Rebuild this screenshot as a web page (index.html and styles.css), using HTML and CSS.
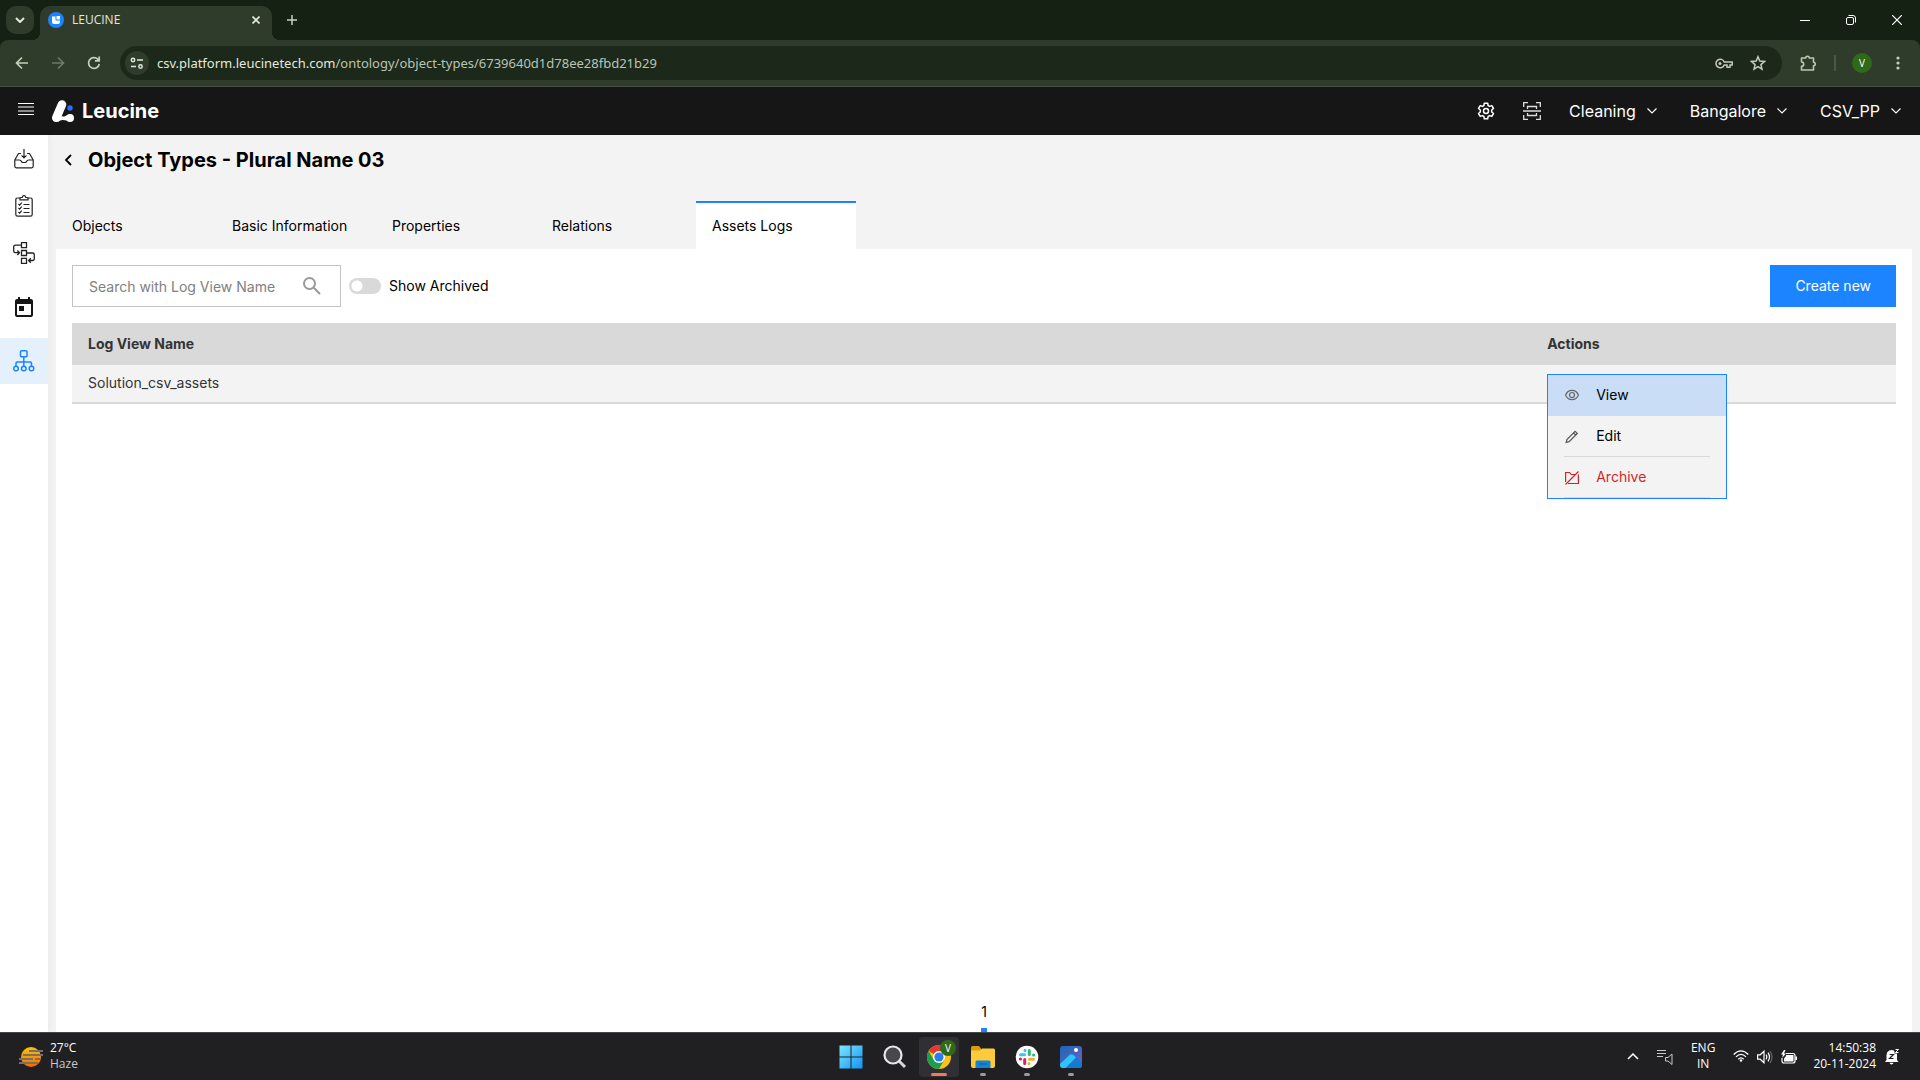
FILE: index.html
```html
<!DOCTYPE html>
<html lang="en">
<head>
    <meta charset="UTF-8">
    <meta name="viewport" content="width=device-width, initial-scale=1.0">
    <title>LEUCINE</title>
    <link rel="stylesheet" href="styles.css">
</head>
<body>

<!-- browser -->
<div class="tab-strip">
    <button class="tab-search" aria-label="Search tabs"><svg width="10" height="6" viewBox="0 0 10 6"><path d="M1 1l4 4 4-4" fill="none" stroke="#dfe8da" stroke-width="2"/></svg></button>
    <div class="browser-tab">
        <svg width="16" height="16" viewBox="0 0 16 16"><circle cx="8" cy="8" r="8" fill="#1d84ff"/><path d="M4 4.5h3.500v4H12v1.500a2 2 0 0 1-2 2H6a2 2 0 0 1-2-2z" fill="#fff"/><path d="M8.500 4H12v3.500H8.500z" fill="#fff"/></svg>
        <span class="tab-name">LEUCINE</span>
        <button class="icon-btn" aria-label="Close tab"><svg width="8" height="8" viewBox="0 0 8 8"><path d="M0.500 0.500l7 7M7.500 0.500l-7 7" stroke="#e2e9dd" stroke-width="1.600"/></svg></button>
    </div>
    <button class="icon-btn new-tab" aria-label="New tab"><svg width="10" height="10" viewBox="0 0 10 10"><path d="M5 0v10M0 5h10" stroke="#c6d3c0" stroke-width="1.500"/></svg></button>
    <div class="window-controls">
        <button aria-label="Minimize"><svg width="10" height="10" viewBox="0 0 10 10"><path d="M0 5.500h10" stroke="#fff"/></svg></button>
        <button aria-label="Restore"><svg width="10" height="10" viewBox="0 0 10 10" fill="none" stroke="#fff"><rect x="0.500" y="2.500" width="7" height="7" rx="1.500"/><path d="M2.500 0.500H7a2.500 2.500 0 0 1 2.500 2.500v4.500"/></svg></button>
        <button aria-label="Close"><svg width="10" height="10" viewBox="0 0 10 10"><path d="M0 0l10 10M10 0L0 10" stroke="#fff" stroke-width="1.200"/></svg></button>
    </div>
</div>

<div class="toolbar">
    <div class="toolbar-nav">
        <button class="icon-btn" aria-label="Back"><svg width="14" height="14" viewBox="0 0 14 14" fill="none" stroke="#c0d2b8" stroke-width="1.700"><path d="M13 7H2M7 1.500L1.500 7 7 12.500"/></svg></button>
        <button class="icon-btn" aria-label="Forward"><svg width="14" height="14" viewBox="0 0 14 14" fill="none" stroke="#6b7a66" stroke-width="1.700"><path d="M1 7h11M7 1.500L12.500 7 7 12.500"/></svg></button>
        <button class="icon-btn" aria-label="Reload"><svg width="14" height="14" viewBox="0 0 14 14" fill="none" stroke="#c0d2b8" stroke-width="1.700"><path d="M12.300 8A5.400 5.400 0 1 1 10.800 3.200L12 4.500"/><path d="M12.200 0.500v4.300H7.900"/></svg></button>
    </div>
    <div class="omnibox">
        <button class="site-info" aria-label="Site information"><svg width="14" height="12" viewBox="0 0 14 12" fill="none" stroke="#dfe8da" stroke-width="1.500"><circle cx="3" cy="3" r="1.700"/><path d="M7 3h6M1 9.500h5"/><circle cx="10.500" cy="9.500" r="1.700"/></svg></button>
        <span class="url">csv.platform.leucinetech.com<span class="url-path">/ontology/object-types/6739640d1d78ee28fbd21b29</span></span>
        <button class="icon-btn" aria-label="Passwords"><svg width="18" height="11" viewBox="0 0 18 11" fill="none" stroke="#c4cabf" stroke-width="1.500"><path d="M9.300 4A4.300 4.300 0 1 0 9.300 7H12v2.200h3V7h2.200V4z"/><circle cx="5" cy="5.500" r="1.500" fill="#c4cabf" stroke="none"/></svg></button>
        <button class="icon-btn" aria-label="Bookmark"><svg width="16" height="16" viewBox="0 0 16 16" fill="none" stroke="#c4cabf" stroke-width="1.500"><path d="M8 1.700l1.800 4.400 4.700.4-3.600 3.100 1.100 4.600L8 11.700l-4 2.500 1.100-4.600L1.500 6.500l4.700-.4z"/></svg></button>
    </div>
    <button class="icon-btn" aria-label="Extensions"><svg width="17" height="17" viewBox="0 0 17 17"><path d="M1.500 3h4.300a1.700 1.700 0 0 1 3.400 0h4.300v4.300a1.700 1.700 0 0 1 0 3.400V15H1.500v-3.600a2.200 2.200 0 0 0 0-4.400z" fill="none" stroke="#b7ccae" stroke-width="1.600" stroke-linejoin="round"/></svg></button>
    <span class="toolbar-line"></span>
    <button class="profile">V</button>
    <button class="icon-btn menu-dots" aria-label="Menu"><svg width="4" height="14" viewBox="0 0 4 14" fill="#c0d2b8"><circle cx="2" cy="2" r="1.600"/><circle cx="2" cy="7" r="1.600"/><circle cx="2" cy="12" r="1.600"/></svg></button>
</div>

<!-- app header -->
<header class="app-header">
    <button class="icon-btn burger" aria-label="Toggle menu"><svg width="16" height="12" viewBox="0 0 16 12" stroke="#fff"><path d="M0 0.500h16M0 4h16M0 8h16M0 11.500h16"/></svg></button>
    <a class="logo" href="#">
        <svg width="22" height="22" viewBox="0 0 22 22"><path d="M10 4.500L4.300 17.800" stroke="#fff" stroke-width="8.600" stroke-linecap="round"/><path d="M6 13.500q3 4 7 2.700l3-1.500v6l-3-.4q-4-1.200-7 1.500z" fill="#fff"/><circle cx="18" cy="18" r="4" fill="#fff"/><circle cx="18" cy="8" r="2.700" fill="#2f6bff"/></svg>
        <span>Leucine</span>
    </a>
    <div class="header-menu">
        <button class="icon-btn" aria-label="Settings"><svg width="18" height="18" viewBox="0 0 18 18" fill="none" stroke="#fff" stroke-width="1.500" stroke-linejoin="round"><path d="M7.300 1.200h3.400l.4 2.300 1.500.9 2.200-.8 1.700 2.900-1.800 1.500v2l1.800 1.500-1.700 2.900-2.200-.8-1.500.9-.4 2.300H7.300l-.4-2.300-1.500-.9-2.200.8-1.700-2.900L3.300 10V8L1.500 6.500l1.700-2.900 2.200.8 1.500-.9z"/><circle cx="9" cy="9" r="2.500"/></svg></button>
        <button class="icon-btn" aria-label="Scan"><svg width="18" height="18" viewBox="0 0 18 18" fill="none" stroke="#dedede" stroke-width="1.300"><path d="M0.700 5V0.700H5M13 0.700h4.300V5M17.300 13v4.300H13M5 17.300H0.700V13M0 9h18M4.500 7V4.500h9V7M4.500 11v2.500h9V11"/></svg></button>
        <button class="drop">Cleaning <svg width="10" height="6" viewBox="0 0 10 6"><path d="M0.500 0.500L5 5l4.500-4.500" fill="none" stroke="#fff" stroke-width="1.200"/></svg></button>
        <button class="drop">Bangalore <svg width="10" height="6" viewBox="0 0 10 6"><path d="M0.500 0.500L5 5l4.500-4.500" fill="none" stroke="#fff" stroke-width="1.200"/></svg></button>
        <button class="drop">CSV_PP <svg width="10" height="6" viewBox="0 0 10 6"><path d="M0.500 0.500L5 5l4.500-4.500" fill="none" stroke="#fff" stroke-width="1.200"/></svg></button>
    </div>
</header>

<div class="workspace">
    <nav class="sidebar">
        <a href="#" aria-label="Inbox"><svg width="20" height="20" viewBox="0 0 20 20" fill="none" stroke="#222" stroke-width="1.200" stroke-linejoin="round"><path d="M7 4.500H4.500L0.800 11v6.300q0 1.500 1.500 1.500h15.400q1.500 0 1.500-1.500V11l-3.700-6.500H13M0.800 11h4.500q1.500 0 2 1.300t1.700 1.200h2q1.200 0 1.700-1.200t2-1.300h4.500M10 0v8.500M7.500 6.300L10 8.800l2.500-2.500"/></svg></a>
        <a href="#" aria-label="Checklists"><svg width="18" height="22" viewBox="0 0 18 22" fill="none" stroke="#222" stroke-width="1.200"><path d="M5 3H2.500Q0.800 3 0.800 4.700v14.800q0 1.700 1.700 1.700h13q1.700 0 1.700-1.700V4.700Q17.200 3 15.500 3H13"/><path d="M5 4.800V3.200q0-.7 1-.7h1.200Q7.500 0.700 9 0.700t1.800 1.800H12q1 0 1 .7v1.600z"/><path d="M3.500 9l1.200 1.200 2-2.500M3.500 13l1.200 1.200 2-2.500M3.500 17l1.200 1.200 2-2.500M8.500 9.500h6M8.500 13.500h6M8.500 17.500h6"/></svg></a>
        <a href="#" aria-label="Flows"><svg width="22" height="22" viewBox="0 0 22 22" fill="none" stroke="#222" stroke-width="1.300"><path d="M8.500 0.700h5v5h-5zM8.500 8.500h5v5h-5zM8.500 16.300h5v5h-5zM8.500 3.200h-6Q0.700 3.200 0.700 5v4q0 1.700 1.500 1.700H6M4.300 8.500l2.200 2.200L4.300 13M13.500 11h6q1.800 0 1.800 1.800v4q0 1.700-1.500 1.700H16M17.800 16.300l-2.200 2.200 2.200 2.200"/></svg></a>
        <a class="spaced" href="#" aria-label="Calendar"><svg width="18" height="20" viewBox="0 0 18 20" fill="#161616"><path d="M2 2h1V0h2v2h8V0h2v2h1a2 2 0 0 1 2 2v14a2 2 0 0 1-2 2H2a2 2 0 0 1-2-2V4a2 2 0 0 1 2-2zm0 5v11h14V7zm2 2h5v5H4z" fill-rule="evenodd"/></svg></a>
        <a class="spaced active" href="#" aria-label="Ontology"><svg width="22" height="22" viewBox="0 0 22 22" fill="none" stroke="#1d84ff" stroke-width="1.500"><rect x="7.500" y="0.800" width="6.500" height="6" rx="1"/><circle cx="3" cy="18.500" r="2.300"/><circle cx="10.800" cy="18.500" r="2.300"/><circle cx="18.500" cy="18.500" r="2.300"/><path d="M10.800 6.800v9.400M3 16.200v-3q0-1.200 1.200-1.200h13.100q1.200 0 1.200 1.200v3"/></svg></a>
    </nav>

    <main class="content">
        <div class="page-title">
            <button class="icon-btn" aria-label="Go back"><svg width="8" height="12" viewBox="0 0 8 12"><path d="M7 1L2 6l5 5" fill="none" stroke="#000" stroke-width="1.800"/></svg></button>
            <h1>Object Types - Plural Name 03</h1>
        </div>

        <nav class="tabs">
            <a href="#">Objects</a>
            <a href="#">Basic Information</a>
            <a href="#">Properties</a>
            <a href="#">Relations</a>
            <a class="active" href="#">Assets Logs</a>
        </nav>

        <section class="panel">
            <div class="filters">
                <div class="search">
                    <input type="text" placeholder="Search with Log View Name" aria-label="Search with Log View Name">
                    <svg width="18" height="18" viewBox="0 0 18 18" fill="none" stroke="#999" stroke-width="2"><circle cx="6.500" cy="6.500" r="5.500"/><path d="M10.500 10.500l6.500 6.500"/></svg>
                </div>
                <input class="toggle" type="checkbox" id="archived">
                <label for="archived">Show Archived</label>
                <button class="create">Create new</button>
            </div>

            <table>
                <thead>
                    <tr><th class="name-col">Log View Name</th><th>Actions</th></tr>
                </thead>
                <tbody>
                    <tr>
                        <td>Solution_csv_assets</td>
                        <td class="actions">
                            <div class="menu">
                                <button class="selected"><svg width="14" height="14" viewBox="0 0 14 14" fill="none" stroke="#666" stroke-width="1.200"><path d="M0.600 6Q2.500 1.300 7 1.300T13.400 6Q11.500 10.700 7 10.700T0.600 6z"/><circle cx="7" cy="6" r="2.500"/></svg><span>View</span></button>
                                <button><svg width="14" height="14" viewBox="0 0 14 14" fill="none" stroke="#555" stroke-width="1.200"><path d="M1.200 12.500l.7-3 8.200-8.200 2.200 2.200-8.200 8.200zM8.500 3l2.200 2.200"/></svg><span>Edit</span></button>
                                <button class="danger"><svg width="14" height="14" viewBox="0 0 14 14" fill="none" stroke="#da1e28" stroke-width="1.200"><path d="M0.600 11V1.500h4L6.200 3.500H10M13.400 3.500v9H3M0.500 13.500L13.500 0.500"/></svg><span>Archive</span></button>
                            </div>
                        </td>
                    </tr>
                </tbody>
            </table>

            <div class="pagination"><button>1</button></div>
        </section>
    </main>
</div>

<!-- windows taskbar -->
<footer class="taskbar">
    <div class="weather">
        <svg width="24" height="20" viewBox="0 0 24 20"><defs><linearGradient id="sun" x2="0" y2="1"><stop stop-color="#ffc400"/><stop offset="1" stop-color="#f26a00"/></linearGradient></defs><circle cx="12" cy="10" r="10" fill="url(#sun)"/><path d="M10 4h14M4 8h20M0 12h14M16 12h5M0 16h19" stroke="#77706a" stroke-width="2"/></svg>
        <div><span>27°C</span><span class="dim">Haze</span></div>
    </div>

    <div class="apps">
        <button aria-label="Start"><svg width="24" height="24" viewBox="0 0 24 24"><defs><linearGradient id="win" gradientUnits="userSpaceOnUse" x1="0" y1="0" x2="24" y2="24"><stop stop-color="#7fe9ff"/><stop offset="1" stop-color="#0f91f5"/></linearGradient></defs><path d="M0.500 0.500H11.500v11H0.500zM12.500 0.500h11v11h-11zM0.500 12.500H11.500v11H0.500zM12.500 12.500h11v11h-11z" fill="url(#win)"/></svg></button>
        <button aria-label="Search"><svg width="24" height="24" viewBox="0 0 24 24" fill="none"><path d="M16 16l6 6" stroke="#d4d8dc" stroke-width="3"/><circle cx="10" cy="10" r="8.500" fill="#48474c" stroke="#e6e9ec" stroke-width="2.200"/></svg></button>
        <button class="open current" aria-label="Chrome"><svg width="24" height="24" viewBox="0 0 24 24"><circle cx="12" cy="12" r="12" fill="#fbc116"/><path d="M12 12L1.600 6A12 12 0 0 1 22.400 6z" fill="#e53a2f"/><path d="M1.600 6A12 12 0 0 0 12 24l5.200-9L12 12 6.800 15z" fill="#1e9e4a"/><circle cx="12" cy="12" r="6" fill="#fff"/><circle cx="12" cy="12" r="4.600" fill="#2b7de9"/></svg><span class="badge">V</span></button>
        <button class="open" aria-label="File Explorer"><svg width="24" height="22" viewBox="0 0 24 22"><path d="M0 1.500Q0 0 1.500 0H8l2 2.500V6H0z" fill="#dd9b0c"/><path d="M0 4.500h9L11 2.500h11.500Q24 2.500 24 4v16q0 2-2 2H2q-2 0-2-2z" fill="#fdcb3c"/><path d="M4.500 22v-6q0-1.500 1.500-1.500h12q1.500 0 1.500 1.500v6z" fill="#1283d8"/><path d="M8 18h8" stroke="#0b5ea5"/></svg></button>
        <button class="open" aria-label="Slack"><svg width="24" height="24" viewBox="0 0 24 24"><circle cx="12" cy="12" r="11.300" fill="#fff"/><g fill="none" stroke-width="3" stroke-linecap="round"><path d="M5.500 9.700h4M10 5.300v.2" stroke="#36c5f0"/><path d="M14.300 5.500v4M18.700 10h-.2" stroke="#2eb67d"/><path d="M14.500 14.300h4M14 18.700v-.2" stroke="#ecb22e"/><path d="M9.700 14.500v4M5.300 14h.2" stroke="#e01e5a"/></g></svg></button>
        <button class="open" aria-label="Photos"><svg width="24" height="24" viewBox="0 0 24 24"><defs><linearGradient id="sky" x2="1" y2="1"><stop stop-color="#1668b8"/><stop offset="1" stop-color="#7560c0"/></linearGradient><clipPath id="frame"><rect x="1" y="1" width="22" height="22" rx="3"/></clipPath></defs><g clip-path="url(#frame)"><path d="M0 0h24v24H0z" fill="url(#sky)"/><path d="M12 10q1.500-1.500 3 0l9 9v5H0z" fill="#1679d4"/><path d="M0 20l10.500-10q2-1.500 4 0l2.500 2.500L5.500 24H0z" fill="#31c3f4"/></g><circle cx="17" cy="5" r="2" fill="#fff"/></svg></button>
    </div>

    <div class="tray">
        <button class="icon-btn" aria-label="Show hidden icons"><svg width="12" height="7" viewBox="0 0 12 7"><path d="M1 6l5-5 5 5" fill="none" stroke="#fff" stroke-width="1.500"/></svg></button>
        <svg width="16" height="16" viewBox="0 0 16 16" fill="none" stroke="#c9c9c9"><path d="M0 1.500h9M0 4.500h9M0 7.500h6M8.500 8.500h2.500l4-3.500v10.500l-4-3.500H8.500z"/></svg>
        <div class="lang"><span>ENG</span><span>IN</span></div>
        <div class="status">
            <svg width="16" height="12" viewBox="0 0 16 12" fill="none" stroke="#fff" stroke-width="1.300"><path d="M0.700 4.500q7.300-7.300 14.600 0M3 6.900q5-5 10 0M5.300 9.200q2.700-2.700 5.400 0"/><circle cx="8" cy="10.500" r="1.200" fill="#fff" stroke="none"/></svg>
            <svg width="16" height="14" viewBox="0 0 16 14" fill="none" stroke="#fff" stroke-width="1.200"><path d="M0.600 4.800h2.600L7 1.200v11.600L3.200 9.200H0.600zM9 4.700q1.600 2.300 0 4.600M11 2.700q3 4.300 0 8.600"/><path d="M13 1q4 6 0 12" stroke="#666"/></svg>
            <svg width="16" height="14" viewBox="0 0 16 14"><path d="M5 3.500h7q2 0 2 2V11q0 2-2 2H3q-2 0-2-2V8" fill="none" stroke="#fff" stroke-width="1.200"/><path d="M5 5h7.500v6.500H3V8.500L5 6zM14.500 6.500H16v3.500h-1.500zM3 0L0 4.500h2L1 8l4-4.500H3L4.500 0z" fill="#fff"/></svg>
        </div>
        <div class="clock"><span>14:50:38</span><span>20-11-2024</span></div>
        <svg width="14" height="16" viewBox="0 0 14 16"><path d="M1.500 11V6a5 5 0 0 1 8-4v2.500H12V11l1.500 2H0zM4.500 13.800h4q-.5 1.700-2 1.700t-2-1.700z" fill="#fff"/><path d="M4.500 5.500h4l-4 4h4" fill="none" stroke="#222" stroke-width="1.200"/><path d="M10.500 0.500H13.500l-3 3h3" fill="none" stroke="#fff"/></svg>
    </div>
</footer>

</body>
</html>
```

FILE: styles.css
```css
* { box-sizing: border-box; }
body { margin: 0; min-height: 100vh; display: flex; flex-direction: column; font-family: Inter, "Liberation Sans", sans-serif; font-size: 14px; line-height: 20px; color: #000; background-color: #f3f3f3; }
button { font: inherit; color: inherit; background: none; border: 0; padding: 0; cursor: pointer; }
a { color: inherit; text-decoration: none; }
svg { display: block; flex: none; }
.icon-btn { display: flex; align-items: center; justify-content: center; min-width: 18px; height: 28px; }

/* browser */
.tab-strip { display: flex; height: 40px; padding: 6px 0 0 6px; background-color: #152213; color: #e2e9dd; font-family: "Open Sans", sans-serif; font-size: 12px; box-shadow: 0 8px 0 #152213; }
.tab-search { display: flex; align-items: center; justify-content: center; width: 28px; height: 28px; border-radius: 10px; background-color: #2f3c2c; }
.browser-tab { position: relative; display: flex; align-items: center; width: 232px; height: 34px; margin-left: 6px; padding: 0 7px 6px 8px; gap: 8px; border-radius: 10px 10px 0 0; background-color: #2f3c2c; }
.browser-tab::before, .browser-tab::after { content: ""; position: absolute; bottom: 0; width: 8px; height: 8px; }
.browser-tab::before { left: -8px; background: radial-gradient(circle at 0 0, transparent 8px, #2f3c2c 8px); }
.browser-tab::after { right: -8px; background: radial-gradient(circle at 100% 0, transparent 8px, #2f3c2c 8px); }
.tab-name { flex: 1; }
.new-tab { margin-left: 11px; }
.window-controls { display: flex; margin: -6px 0 0 auto; }
.window-controls button { display: flex; align-items: center; justify-content: center; width: 46px; height: 40px; }

.toolbar { position: relative; display: flex; align-items: center; height: 47px; padding: 0 13px; border-bottom: 1px solid #465342; border-radius: 8px 8px 0 0; background-color: #2f3c2c; font-family: "Open Sans", sans-serif; }
.toolbar-nav { display: flex; gap: 18px; margin-right: 17px; }
.omnibox { flex: 1; display: flex; align-items: center; height: 34px; padding: 0 15px 0 5px; margin-right: 17px; gap: 16px; border-radius: 17px; background-color: #1c2819; }
.site-info { display: flex; align-items: center; justify-content: center; width: 24px; height: 24px; border-radius: 12px; background-color: #2f3c2c; }
.url { flex: 1; margin-left: -8px; font-family: "Noto Sans", sans-serif; font-size: 13px; color: #e2e9dd; }
.url-path { color: #b9c4b4; }
.toolbar-line { width: 2px; height: 16px; margin: 0 16px 0 17px; background-color: #465a40; }
.profile { width: 20px; height: 20px; border-radius: 10px; background-color: #2f6a1c; color: #fff; font-size: 10px; }
.menu-dots { margin-left: 17px; }

/* app header */
.app-header { display: flex; align-items: center; height: 48px; padding: 0 19px 0 17px; background-color: #161616; color: #fff; }
.burger { padding-bottom: 4px; }
.logo { display: flex; align-items: center; gap: 8px; margin-left: 17px; font-size: 20px; font-weight: 700; }
.header-menu { display: flex; align-items: center; margin-left: auto; gap: 28px; font-size: 16px; }
.drop { display: flex; align-items: center; gap: 11px; }
.drop + .drop { margin-left: 5px; }

/* layout */
.workspace { flex: 1; display: flex; }
.sidebar { width: 48px; padding-top: 1px; background-color: #fff; box-shadow: 2px 0 6px rgba(0, 0, 0, 0.04); }
.sidebar a { display: flex; align-items: center; justify-content: center; height: 46px; margin-bottom: 1px; }
.sidebar .spaced { margin-top: 8px; }
.sidebar .active { background-color: #e5f0fd; }
.content { flex: 1; display: flex; flex-direction: column; padding: 0 8px; }

.page-title { display: flex; align-items: center; gap: 11px; height: 50px; padding-left: 3px; }
.page-title h1 { margin: 0; font-size: 20px; line-height: 28px; font-weight: 700; }

.tabs { display: flex; margin-top: 16px; }
.tabs a { width: 160px; height: 48px; padding: 13px 16px; border-top: 2px solid transparent; }
.tabs .active { border-top-color: #1d84ff; background-color: #fff; }

.panel { flex: 1; display: flex; flex-direction: column; padding: 16px 16px 0; background-color: #fff; }
.filters { display: flex; align-items: center; gap: 8px; margin-bottom: 16px; }
.search { display: flex; align-items: center; width: 269px; height: 42px; padding: 0 19px 0 16px; border: 1px solid #c4c4c4; }
.search input { flex: 1; min-width: 0; padding: 2px 0 0; border: 0; outline: 0; font: inherit; background: none; }
.search input::placeholder { color: #808080; }
.toggle { appearance: none; width: 32px; height: 16px; margin: 0; border-radius: 8px; background: radial-gradient(circle at 8px 8px, #fff 5px, #d9d9d9 6px); }
.create { height: 42px; margin-left: auto; padding: 0 25px; background-color: #1d84ff; color: #fff; }

/* table */
table { width: 100%; table-layout: fixed; border-collapse: separate; border-spacing: 0; color: #333; }
th { height: 42px; padding: 0 16px; text-align: left; font-weight: 700; background-color: #d9d9d9; }
.name-col { width: 80%; }
td { height: 39px; padding: 0 16px 2px; background-color: #f3f3f3; border-bottom: 2px solid #d9d9d9; }
.actions { position: relative; }
.menu { position: absolute; left: 16px; top: 9px; width: 180px; border: 1px solid #1d84ff; background-color: #f3f3f3; color: #000; }
.menu button { display: flex; align-items: center; width: 100%; height: 41px; padding: 0 16px 0 17px; }
.menu svg { margin-right: 1px; }
.menu span { flex: 1; height: 41px; padding: 10px 0 0 16px; text-align: left; line-height: 20px; }
.menu button { background: linear-gradient(#d9d9d9, #d9d9d9) 16px 100% / 146px 1px no-repeat; }
.menu .selected { background-color: #c9ddf6; }
.menu .danger { color: #da1e28; }

.pagination { display: flex; justify-content: center; margin-top: auto; }
.pagination button { height: 30px; padding-bottom: 6px; border-bottom: 4px solid #1d84ff; }

/* taskbar */
.taskbar { display: grid; grid-template-columns: 1fr auto 1fr; align-items: center; height: 48px; border-top: 1px solid #454545; background-color: #202022; color: #fff; font-family: "Open Sans", sans-serif; font-size: 12px; line-height: 16px; }
.taskbar span { display: block; }
.weather { display: flex; align-items: center; gap: 7px; padding-left: 19px; }
.dim { color: #c8c8c8; }
.apps { display: flex; gap: 4px; padding-left: 2px; }
.apps button { position: relative; display: flex; align-items: center; justify-content: center; width: 40px; height: 40px; border-radius: 4px; }
.apps .open::after { content: ""; position: absolute; bottom: 1px; width: 6px; height: 3px; border-radius: 2px; background-color: #9a9a9a; }
.apps .current { background-color: #302f33; }
.apps .current::after { width: 16px; background-color: #f4795b; }
.badge { position: absolute; top: 3px; right: 3px; width: 16px; height: 16px; border-radius: 8px; background-color: #2f6a1c; font-size: 10px; }
.tray { display: flex; align-items: center; justify-content: flex-end; gap: 15px; padding-right: 21px; }
.lang { text-align: center; margin: 0 3px; }
.status { display: flex; gap: 8px; }
.clock { text-align: right; margin: 0 -6px 0 1px; }
.weather div, .lang, .clock { padding-bottom: 2px; }
```
